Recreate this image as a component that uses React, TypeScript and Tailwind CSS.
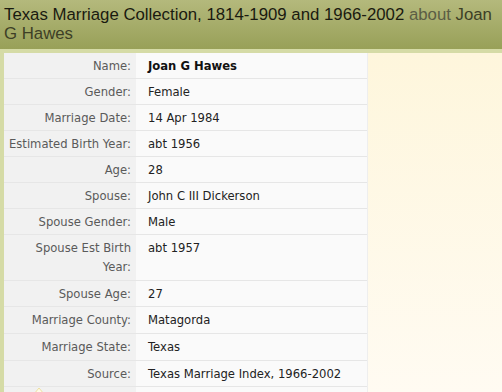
const rows: { label: string; value: string; bold?: boolean; tall?: boolean }[] = [
  { label: "Name:", value: "Joan G Hawes", bold: true },
  { label: "Gender:", value: "Female" },
  { label: "Marriage Date:", value: "14 Apr 1984" },
  { label: "Estimated Birth Year:", value: "abt 1956" },
  { label: "Age:", value: "28" },
  { label: "Spouse:", value: "John C III Dickerson" },
  { label: "Spouse Gender:", value: "Male" },
  { label: "Spouse Est Birth Year:", value: "abt 1957", tall: true },
  { label: "Spouse Age:", value: "27" },
  { label: "Marriage County:", value: "Matagorda", tall: true },
  { label: "Marriage State:", value: "Texas", tall: true },
  { label: "Source:", value: "Texas Marriage Index, 1966-2002" },
];

const App = () => {
  return (
    <div className="w-[502px] h-[392px] overflow-hidden bg-[#fff8e2] font-['DejaVu_Sans',Verdana,sans-serif]">
      {/* Title bar */}
      <header className="h-[49px] px-[4px] pt-[5px] bg-gradient-to-b from-[#b4b97c] to-[#98a058] text-[16.8px] leading-[19px] font-['Liberation_Sans',Tahoma,sans-serif]">
        <span className="text-[#1a1a10]">Texas Marriage Collection, 1814-1909 and 1966-2002 </span>
        <span className="text-[#5b5d45]">about </span>
        <span className="text-[#3d3f26]">Joan G Hawes</span>
      </header>
      <div className="h-[4px] bg-[#d5dba6]" />

      <div className="flex h-[339px]">
        <div className="w-[4px] bg-[#d5dba6]" />
        <div className="w-[363px] bg-[#fafafa]">
          <table className="w-full border-collapse text-[11.6px] leading-[19px]">
            <tbody>
              {rows.map((r) => (
                <tr key={r.label} className="border-b border-[#e6e6e6]">
                  <td
                    className={
                      r.tall
                        ? "w-[132px] bg-[#f1f1f1] text-right text-[#5a5a5a] pr-[5px] pl-[1px] pt-[4px] pb-[3px] align-top"
                        : "w-[132px] bg-[#f1f1f1] text-right text-[#5a5a5a] pr-[5px] pl-[1px] pt-[4px] pb-[2px] align-top"
                    }
                  >
                    {r.label}
                  </td>
                  <td
                    className={
                      r.bold
                        ? "pl-[12px] pt-[4px] text-[#111] font-bold align-top"
                        : "pl-[12px] pt-[4px] text-[#222] align-top"
                    }
                  >
                    {r.value}
                  </td>
                </tr>
              ))}
              <tr>
                <td className="bg-[#f1f1f1] h-[10px] relative">
                  <svg
                    className="absolute left-[29px] top-[0px]"
                    width="12"
                    height="7"
                    viewBox="0 0 12 7"
                  >
                    <path d="M1 7 L6 1 L11 7" fill="#fffbe8" stroke="#ecdfa0" strokeWidth="1" />
                  </svg>
                </td>
                <td />
              </tr>
            </tbody>
          </table>
        </div>
        <div className="flex-1 border-l border-[#eeeeee] bg-gradient-to-b from-[#fef6dc] to-[#fffbf2]" />
      </div>
    </div>
  );
};

export default App;
